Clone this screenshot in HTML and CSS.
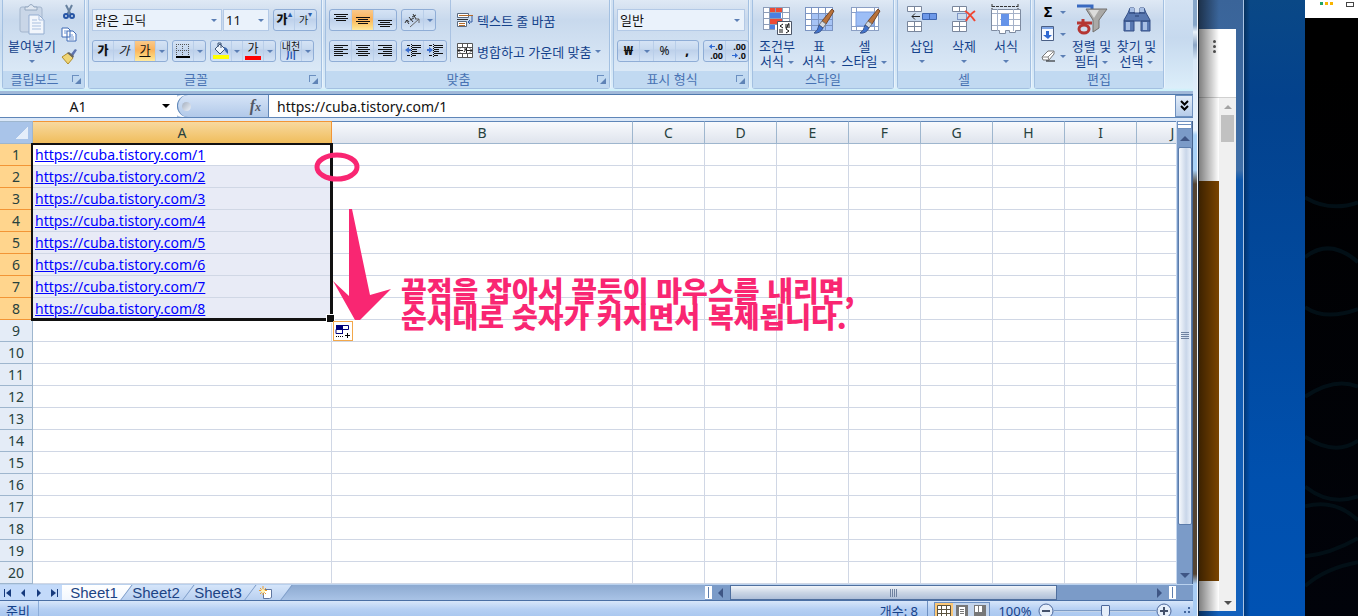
FILE: index.html
```html
<!DOCTYPE html>
<html lang="ko">
<head>
    <meta charset="UTF-8">
    <meta name="viewport" content="width=device-width, initial-scale=1.0">
    <title>Sheet1</title>
    <link rel="stylesheet" href="styles.css">
</head>
<body>
    <main class="excel">
        <!-- Ribbon -->
        <div class="ribbon">
            <section class="group clipboard">
                <div class="group-body">
                    <button class="big">
                        <svg width="32" height="32" viewBox="0 0 32 32"><rect x="4" y="3" width="22" height="25" rx="2" fill="#c9d6e7" stroke="#a3b5cc"/><path d="M9 6V3h3q3-5 6 0h3v3z" fill="#dfe7f1" stroke="#94a7bf"/><path d="M13 11h10l5 5v14H13z" fill="#f2f6fc" stroke="#93add0"/><path d="M23 11v5h5M16 16h5M16 19h9M16 22h9M16 25h9" fill="none" stroke="#a9bfdf"/></svg>
                        <span>붙여넣기</span><i class="caret"></i>
                    </button>
                    <div class="stack">
                        <button class="small" aria-label="잘라내기"><svg width="16" height="16" viewBox="0 0 16 16"><path d="M5 1l5 10M11 1L6 11" stroke="#67819f" stroke-width="2"/><circle cx="5" cy="12" r="2" fill="none" stroke="#2755a5" stroke-width="2"/><circle cx="11" cy="12" r="2" fill="none" stroke="#2755a5" stroke-width="2"/></svg></button>
                        <button class="small" aria-label="복사"><svg width="16" height="16" viewBox="0 0 16 16"><path d="M1 2h6l2 2v7H1zM6 5h6l3 3v7H6z" fill="#fff" stroke="#3f6bb5"/><path d="M3 5h3M3 7h3M8 9h4M8 11h5M8 13h5" stroke="#6f96d4"/></svg></button>
                        <button class="small" aria-label="서식 복사"><svg width="16" height="16" viewBox="0 0 16 16"><path d="M10 6l4-5 2 1-4 6z" fill="#5d74b0"/><path d="M1 9l6-4 5 5-5 6z" fill="#efd575" stroke="#b08d2c"/><path d="M6 5l6 5 1-2-5-4z" fill="#666"/></svg></button>
                    </div>
                </div>
                <h2>클립보드<button class="launch" aria-label="클립보드 옵션"></button></h2>
            </section>

            <section class="group font">
                <div class="group-body rows">
                    <div class="row">
                        <div class="combos">
                            <label class="combo name"><select aria-label="글꼴"><option>맑은 고딕</option></select></label>
                            <label class="combo size"><select aria-label="글꼴 크기"><option>11</option></select></label>
                        </div>
                        <div class="tools">
                            <button class="bold grow">가<sup>▴</sup></button><button class="shrink">가<sup>▾</sup></button>
                        </div>
                    </div>
                    <div class="row">
                        <div class="tools">
                            <button class="bold">가</button><button class="italic">가</button><button class="under on">가</button><button class="drop" aria-label="밑줄 종류"><i class="caret"></i></button>
                        </div>
                        <div class="tools">
                            <button aria-label="테두리"><svg width="14" height="14" viewBox="0 0 14 14"><path d="M0 .5h14M0 6.500h14M.5 0v12M6.500 0v12M12.500 0v12" stroke="#555" stroke-dasharray="1 1"/><path d="M0 13h14" stroke="#000" stroke-width="2"/></svg></button><button class="drop" aria-label="테두리 종류"><i class="caret"></i></button>
                        </div>
                        <div class="tools">
                            <button aria-label="채우기 색"><svg width="18" height="18" viewBox="0 0 18 18"><path d="M3 7l5-5 5 5-5 5z" fill="#eef4fb" stroke="#3c5578"/><path d="M6 5V1h3v5" fill="none" stroke="#3c5578"/><path d="M12 5q5 1 4 7q-2-1-4-5z" fill="#3d69ae"/><path d="M1 13h16v4H1z" fill="#ff0"/></svg></button><button class="drop" aria-label="채우기 색 선택"><i class="caret"></i></button><button class="color"><span>가</span></button><button class="drop" aria-label="글꼴 색 선택"><i class="caret"></i></button>
                        </div>
                        <div class="tools">
                            <button class="ruby"><small>내천</small><b>川</b></button><button class="drop" aria-label="윗주 선택"><i class="caret"></i></button>
                        </div>
                    </div>
                </div>
                <h2>글꼴<button class="launch" aria-label="글꼴 옵션"></button></h2>
            </section>

            <section class="group align">
                <div class="group-body">
                    <div class="rows">
                        <div class="row">
                            <div class="tools">
                                <button aria-label="위쪽 맞춤"><svg width="14" height="16" viewBox="0 0 14 16"><path d="M0 2.500h14M2 4.500h10M0 6.500h14M2 8.500h10" stroke="#111"/></svg></button><button class="on" aria-label="가운데 맞춤"><svg width="14" height="16" viewBox="0 0 14 16"><path d="M0 5.500h14M2 7.500h10M0 9.500h14M2 11.500h10" stroke="#111"/></svg></button><button aria-label="아래쪽 맞춤"><svg width="14" height="16" viewBox="0 0 14 16"><path d="M0 8.500h14M2 10.500h10M0 12.500h14M2 14.500h10" stroke="#111"/></svg></button>
                            </div>
                            <div class="tools">
                                <button aria-label="방향"><svg width="17" height="16" viewBox="0 0 17 16"><path d="M2 8l3 4M1 11q2-5 4-1M5 5l4 5M6 8l4-2M9 2l3 5M8 5l4-2" fill="none" stroke="#333"/><path d="M6 15l9-8M11 7h4v4" fill="none" stroke="#666"/></svg></button><button class="drop" aria-label="방향 선택"><i class="caret"></i></button>
                            </div>
                        </div>
                        <div class="row">
                            <div class="tools">
                                <button aria-label="왼쪽 맞춤"><svg width="14" height="14" viewBox="0 0 14 14"><path d="M0 1.500h14M0 3.500h9M0 5.500h14M0 7.500h9M0 9.500h14M0 11.500h9" stroke="#111"/></svg></button><button aria-label="가로 가운데"><svg width="14" height="14" viewBox="0 0 14 14"><path d="M0 1.500h14M2 3.500h10M0 5.500h14M2 7.500h10M0 9.500h14M2 11.500h10" stroke="#111"/></svg></button><button aria-label="오른쪽 맞춤"><svg width="14" height="14" viewBox="0 0 14 14"><path d="M0 1.500h14M5 3.500h9M0 5.500h14M5 7.500h9M0 9.500h14M5 11.500h9" stroke="#111"/></svg></button>
                            </div>
                            <div class="tools">
                                <button aria-label="내어쓰기"><svg width="16" height="14" viewBox="0 0 16 14"><path d="M2 1.500h3M7 1.500h9M7 3.500h9M7 5.500h5M7 7.500h5M7 9.500h9M2 11.500h3M7 11.500h4" stroke="#111"/><path d="M6.500 0v14" stroke="#111" stroke-dasharray="1 1"/><path d="M0 6l4-3v2h2v2H4v2z" fill="#3c6fd0"/></svg></button><button aria-label="들여쓰기"><svg width="16" height="14" viewBox="0 0 16 14"><path d="M2 1.500h3M7 1.500h9M7 3.500h9M7 5.500h5M7 7.500h5M7 9.500h9M2 11.500h3M7 11.500h4" stroke="#111"/><path d="M6.500 0v14" stroke="#111" stroke-dasharray="1 1"/><path d="M6 6L2 3v2H0v2h2v2z" fill="#3c6fd0"/></svg></button>
                            </div>
                        </div>
                    </div>
                    <div class="rows wide">
                        <button class="text"><svg width="16" height="16" viewBox="0 0 16 16"><path d="M.5 1.500h11v4H.5zM.5 9.500h9v5H.5z" fill="#fff" stroke="#59697f"/><path d="M2 3.500h14M2 11.500h6M2 13.500h6" stroke="#b66b28"/><path d="M0 7.500h11" stroke="#333"/><path d="M15 4v6h-3M13 8l-2 2 2 2" fill="none" stroke="#345da3"/></svg>텍스트 줄 바꿈</button>
                        <button class="text"><svg width="16" height="16" viewBox="0 0 16 16"><path d="M.5 .5h15v14H.5zM5.500 0v4M10.500 0v4M5.500 11v4M10.500 11v4M0 4.500h16M0 10.500h16" fill="#fff" stroke="#555"/><path d="M1 7.500h5M3 5.500l-2 2 2 2M10 7.500h5M13 5.500l2 2-2 2M7 6h2l-2 3M9.500 5v5" fill="none" stroke="#222"/></svg>병합하고 가운데 맞춤<i class="caret"></i></button>
                    </div>
                </div>
                <h2>맞춤<button class="launch" aria-label="맞춤 옵션"></button></h2>
            </section>

            <section class="group number">
                <div class="group-body rows">
                    <div class="row">
                        <label class="combo fill"><select aria-label="표시 형식"><option>일반</option></select></label>
                    </div>
                    <div class="row">
                        <div class="tools">
                            <button class="bold">₩</button><button class="drop" aria-label="통화 선택"><i class="caret"></i></button><button>%</button><button class="bold">,</button>
                        </div>
                        <div class="tools">
                            <button class="digits"><span><svg width="6" height="5" viewBox="0 0 6 5"><path d="M0 2.500L3 0v2h3v1H3v2z" fill="#2e68d2"/></svg>.0</span><span>.00</span></button><button class="digits"><span>.00</span><span><svg width="6" height="5" viewBox="0 0 6 5"><path d="M6 2.500L3 0v2H0v1h3v2z" fill="#2e68d2"/></svg>.0</span></button>
                        </div>
                    </div>
                </div>
                <h2>표시 형식<button class="launch" aria-label="표시 형식 옵션"></button></h2>
            </section>

            <section class="group styles">
                <div class="group-body">
                    <button class="big">
                        <svg width="32" height="32" viewBox="0 0 32 32"><path d="M2 3h27v23H2z" fill="#fff"/><path d="M9 3h13v5H9zM9 14h13v6H9z" fill="#ed4a35"/><path d="M9 8h11v6H9zM9 20h5v6H9z" fill="#4b7fe3"/><path d="M2.500 3v23M8.500 3v23M14.500 3v5M21.500 3v23M28.500 3v23M2 3.500h27M2 8.500h27M2 14.500h27M2 20.500h27M2 25.500h12" stroke="#8c9cb8"/><path d="M16.500 17.500h14v13h-14z" fill="#fff" stroke="#4c5668"/><path d="M22 20l-3 2 3 2M18 26h4M24 21h5M24 23h5M28 19l-3 6M25 25l3 2-3 2M18 28h4" fill="none" stroke="#111"/></svg>
                        <span>조건부</span><span>서식<i class="caret"></i></span>
                    </button>
                    <button class="big">
                        <svg width="32" height="32" viewBox="0 0 32 32"><path d="M2 3h28v24H2z" fill="#fff"/><path d="M9 9h21v18H9z" fill="#a6c3f5"/><path d="M2.500 3v24M8.500 3v24M15.500 3v24M22.500 3v24M29.500 3v24M2 3.500h28M2 9.500h28M2 15.500h28M2 21.500h28M2 26.500h28" stroke="#7b94c2"/><path d="M29 5l2 2-8 13-4-3z" fill="#b9723a" stroke="#74472a"/><path d="M19 17l4 3-3 4-4-3z" fill="#d5d9df" stroke="#777"/><path d="M16 21l4 3q-3 6-9 5q4-2 5-8z" fill="#3f73cf" stroke="#3a548c"/></svg>
                        <span>표</span><span>서식<i class="caret"></i></span>
                    </button>
                    <button class="big last">
                        <svg width="32" height="32" viewBox="0 0 32 32"><path d="M2 3h28v24H2z" fill="#fff"/><path d="M2.500 3v24M7.500 3v24M25.500 3v24M29.500 3v24M2 3.500h28M2 8.500h28M2 22.500h28M2 26.500h28" stroke="#8b9fc4"/><path d="M7 8h18v14H7z" fill="#9dbef6" stroke="#7b9cde"/><path d="M29 5l2 2-8 13-4-3z" fill="#b9723a" stroke="#74472a"/><path d="M19 17l4 3-3 4-4-3z" fill="#d5d9df" stroke="#777"/><path d="M16 21l4 3q-3 6-9 5q4-2 5-8z" fill="#3f73cf" stroke="#3a548c"/></svg>
                        <span>셀</span><span>스타일<i class="caret"></i></span>
                    </button>
                </div>
                <h2>스타일</h2>
            </section>

            <section class="group cells">
                <div class="group-body">
                    <button class="big">
                        <svg width="32" height="32" viewBox="0 0 32 32"><path d="M1.500 2.500h14v5h-14zM8.500 2v5M1.500 17.500h14v10h-14zM8.500 17v10M1 22.500h14" fill="#fff" stroke="#79869c"/><path d="M16.500 9.500h14v6h-14zM23.500 9v6" fill="#6d98e8" stroke="#3f66b0"/><path d="M6 12.500h8M9 9.500l-3 3 3 3" fill="none" stroke="#222"/></svg>
                        <span>삽입</span><i class="caret"></i>
                    </button>
                    <button class="big">
                        <svg width="32" height="32" viewBox="0 0 32 32"><path d="M4.500 2.500h14v5h-14zM11.500 2v5M4.500 17.500h14v10h-14zM11.500 17v10M4 22.500h14" fill="#fff" stroke="#79869c"/><path d="M9.500 9.500h9v6h-9z" fill="none" stroke="#2f4f9a" stroke-dasharray="1 1"/><path d="M17 7q5 3 10 10M27 7q-6 4-9 10" fill="none" stroke="#f04632" stroke-width="2"/></svg>
                        <span>삭제</span><i class="caret"></i>
                    </button>
                    <button class="big">
                        <svg width="32" height="32" viewBox="0 0 32 32"><path d="M2 2.500h26M2 0v5M28 0v5" stroke="#333" stroke-dasharray="3 1"/><path d="M1.500 5.500h29v21h-5v2h-6v-2h-4v3h-6v-3h-8z" fill="#fff" stroke="#7e8ba0"/><path d="M2 9.500h28M2 21.500h28M7.500 5v22M23.500 5v22M10 15.500h20" stroke="#a4b1c8"/><path d="M11 10h8v12h-8z" fill="#6694e9"/></svg>
                        <span>서식</span><i class="caret"></i>
                    </button>
                </div>
                <h2>셀</h2>
            </section>

            <section class="group edit">
                <div class="group-body">
                    <div class="stack">
                        <button class="small"><b>Σ</b><i class="caret"></i></button>
                        <button class="small" aria-label="채우기"><svg width="14" height="16" viewBox="0 0 14 16"><path d="M.5 .5h12v14H.5z" fill="#f4f8ff" stroke="#4a5f85"/><path d="M1 2h11" stroke="#7fa5e5" stroke-width="2"/><path d="M5 5h3v4h3l-4 4-5-4h3z" fill="#2e68d2"/></svg><i class="caret"></i></button>
                        <button class="small" aria-label="지우기"><svg width="14" height="16" viewBox="0 0 14 16"><path d="M1 9l6-6h6v3l-5 6H2z" fill="#fff" stroke="#777"/><path d="M1 9h6l6-6M7 9l1 3" fill="none" stroke="#888"/><path d="M5 13h9" stroke="#111"/></svg><i class="caret"></i></button>
                    </div>
                    <button class="big">
                        <svg width="32" height="32" viewBox="0 0 32 32"><path d="M1 2h15v9" fill="none" stroke="#3869c0" stroke-width="3"/><path d="M10 5h21l-8 11v8l-6 4V16z" fill="#aaa9a7" stroke="#73716e"/><path d="M13 6h10l-5 8z" fill="#dcdcdb"/><path d="M7 15v3M1 19h15" stroke="#b53633" stroke-width="3"/><ellipse cx="8" cy="25" rx="5" ry="4" fill="none" stroke="#b53633" stroke-width="3"/></svg>
                        <span>정렬 및</span><span>필터<i class="caret"></i></span>
                    </button>
                    <button class="big">
                        <svg width="32" height="32" viewBox="0 0 32 32"><path d="M9 4h4v5h6V4h4l2 5 4 7v11h-9V17h-7v10H3V16l4-7z" fill="#5878b1" stroke="#344f86"/><path d="M9 4h4v4H9zM19 4h4v4h-4zM5 18h4v8H5zM22 18h4v8h-4z" fill="#a8bfe4"/><path d="M3 17h10M20 17h9M8 9h6M18 9h6M14 12h4" stroke="#263e70"/></svg>
                        <span>찾기 및</span><span>선택<i class="caret"></i></span>
                    </button>
                </div>
                <h2>편집</h2>
            </section>
        </div>

        <!-- Formula bar -->
        <div class="formula-bar">
            <label class="name-box"><input type="text" value="A1" aria-label="이름 상자"></label>
            <div class="fx"><span class="knob"></span><button>f<small>x</small></button></div>
            <input class="formula" type="text" value="https://cuba.tistory.com/1" aria-label="수식 입력줄">
            <button class="expand" aria-label="수식 입력줄 확장"><svg width="9" height="12" viewBox="0 0 9 12"><path d="M1 1l3.500 3.500L8 1M1 6l3.500 3.500L8 6" fill="none" stroke="#000" stroke-width="2"/></svg></button>
        </div>

        <!-- Sheet -->
        <div class="sheet-area">
            <div class="sheet">
                <table>
                    <colgroup><col class="col-head"><col class="col-a"><col class="col-b"><col span="8" class="col-rest"></colgroup>
                    <thead>
                        <tr><th class="corner"></th><th class="picked">A</th><th>B</th><th>C</th><th>D</th><th>E</th><th>F</th><th>G</th><th>H</th><th>I</th><th>J</th></tr>
                    </thead>
                    <tbody id="rows"></tbody>
                </table>
                <div class="selection"></div>
                <button class="autofill" aria-label="자동 채우기 옵션"><svg width="16" height="16" viewBox="0 0 16 16"><path d="M1 2h6v5H1z" fill="#00007b"/><path d="M1.500 2.500h12v4h-12zM7.500 2v9M1 6.500v4h6" fill="none" stroke="#00007b"/><path d="M1 13.500h7" stroke="#000" stroke-dasharray="1 1"/><path d="M10 12.500h5M12.500 10v5" stroke="#000"/></svg></button>
                <svg class="marks" width="400" height="210" viewBox="0 121 400 210">
                    <ellipse cx="337" cy="167" rx="20" ry="12" fill="none" stroke="#f92672" stroke-width="5"/>
                    <path d="M349 209h3l18 86 21-6-31 31h-5l-22-39 16 15z" fill="#f92672"/>
                </svg>
                <p class="note">끝점을 잡아서 끌듯이 마우스를 내리면,<br>순서대로 숫자가 커지면서 복제됩니다.</p>
            </div>
            <div class="vscroll">
                <span class="split"></span>
                <span class="arrow up"></span>
                <span class="thumb"></span>
                <span class="arrow down"></span>
            </div>
        </div>

        <!-- Sheet tabs -->
        <div class="tab-bar">
            <div class="tab-nav">
                <button aria-label="첫 시트"><svg width="9" height="8" viewBox="0 0 9 8"><path d="M1 0h1v8H1zM8 0v8L3 4z" fill="#163a7d"/></svg></button>
                <button aria-label="이전 시트"><svg width="9" height="8" viewBox="0 0 9 8"><path d="M6 0v8L2 4z" fill="#163a7d"/></svg></button>
                <button aria-label="다음 시트"><svg width="9" height="8" viewBox="0 0 9 8"><path d="M3 0v8l4-4z" fill="#163a7d"/></svg></button>
                <button aria-label="마지막 시트"><svg width="9" height="8" viewBox="0 0 9 8"><path d="M7 0h1v8H7zM1 0v8l5-4z" fill="#163a7d"/></svg></button>
            </div>
            <div class="tabs">
                <button class="tab current">Sheet1</button><button class="tab">Sheet2</button><button class="tab">Sheet3</button><button class="tab new" aria-label="시트 삽입"><svg width="16" height="14" viewBox="0 0 16 14"><path d="M5.500 3.500h8v8l-2 1h-6z" fill="#fff" stroke="#5f76a0"/><path d="M5 0v9M1 4.500h8M2 2l6 6M8 2L2 8" stroke="#ee9d2e"/><circle cx="5" cy="5" r="2" fill="#fff4b8"/></svg></button>
            </div>
            <div class="hscroll">
                <span class="split"></span>
                <span class="arrow left"></span>
                <span class="thumb"></span>
                <span class="arrow right"></span>
                <span class="split"></span>
            </div>
        </div>

        <!-- Status bar -->
        <div class="status">
            <span class="ready">준비</span>
            <span class="count">개수: 8</span>
            <div class="views">
                <button class="on" aria-label="기본"><svg width="14" height="12" viewBox="0 0 14 12"><path d="M.5 .5h13v11H.5zM0 4.500h14M0 8.500h14M4.500 0v12M9.500 0v12" fill="#fff" stroke="#5a5340"/></svg></button><button aria-label="페이지 레이아웃"><svg width="12" height="12" viewBox="0 0 12 12"><path d="M0 0h12v12H0z" fill="#777"/><path d="M3 2h6v9H3z" fill="#fff"/><path d="M4 4.500h4M4 6.500h4M4 8.500h4" stroke="#777"/></svg></button><button aria-label="페이지 나누기"><svg width="12" height="12" viewBox="0 0 12 12"><path d="M0 0h12v12H0z" fill="#777"/><path d="M1 1h3v6H1zM5 1h3v6H5z" fill="#fff"/></svg></button>
            </div>
            <button class="percent">100%</button>
            <button class="zoom" aria-label="축소"><svg width="16" height="16" viewBox="0 0 16 16"><circle cx="8" cy="8" r="7" fill="#e5eefa" stroke="#4c679b"/><path d="M4 8h8" stroke="#42506b" stroke-width="2"/></svg></button>
            <input type="range" min="0" max="100" value="50" aria-label="확대/축소">
            <button class="zoom" aria-label="확대"><svg width="16" height="16" viewBox="0 0 16 16"><circle cx="8" cy="8" r="7" fill="#e5eefa" stroke="#4c679b"/><path d="M4 8h8M8 4v8" stroke="#42506b" stroke-width="2"/></svg></button>
            <svg class="grip" width="10" height="12" viewBox="0 0 10 12"><path d="M6 2h2v2H6zM2 6h2v2H2zM6 6h2v2H6z" fill="#42659c"/></svg>
        </div>
    </main>

    <div class="frame"></div>

    <!-- Browser window behind -->
    <div class="browser">
        <div class="toolbar"><button aria-label="메뉴"><i></i><i></i><i></i></button></div>
        <div class="viewport">
            <div class="page"></div>
            <div class="scrollbar"><span class="arrow up"></span><span class="thumb"></span><span class="arrow down"></span></div>
        </div>
    </div>

    <div class="desktop"></div>

    <div class="dark">
        <div class="dark-top"><i class="green"></i><i></i><i></i><svg width="8" height="5" viewBox="0 0 8 5"><path d="M0 .5h8M0 4.500h8M.5 0v5M7.500 0v5" stroke="#444"/></svg></div>
        <svg class="waves" viewBox="0 0 53 600" preserveAspectRatio="none"><path d="M0 180q25 15 53 5M0 240q25-20 53 5M0 290q20 14 53 2M0 380q30-20 53-10M0 420q30 20 53 4M0 470q25 20 53 10M0 490q30-8 53 14M0 540q25-2 53-18M0 570q20-18 53-24" fill="none" stroke="#020f16" stroke-width="4"/></svg>
    </div>

    <script>
        const tbody = document.getElementById('rows');

        for (let r = 1; r <= 20; r++) {
            const linked = r <= 8;
            let html = `<th${linked ? ' class="picked"' : ''}>${r}</th>`;
            html += linked
                ? `<td class="linked"><a href="https://cuba.tistory.com/${r}">https://cuba.tistory.com/${r}</a></td>`
                : '<td></td>';
            html += '<td></td>'.repeat(9);
            const row = document.createElement('tr');
            row.innerHTML = html;
            tbody.appendChild(row);
        }
    </script>
</body>
</html>
```
FILE: styles.css
```css
* {
    box-sizing: border-box;
}
body {
    margin: 0;
    height: 100vh;
    display: flex;
    overflow: hidden;
    font-family: "Noto Sans", "Noto Sans CJK KR", sans-serif;
    font-size: 13px;
    color: #15428b;
}
button, input, select {
    font: inherit;
    color: inherit;
    margin: 0;
    padding: 0;
    border: none;
    background: none;
}
svg {
    display: block;
    flex: none;
}
.excel {
    flex: 1;
    min-width: 0;
    display: flex;
    flex-direction: column;
    background: #cfe0f5;
}

/* Ribbon */
.ribbon {
    display: flex;
    gap: 3px;
    flex: none;
    height: 95px;
    padding: 0 2px 6px;
    background: linear-gradient(#d3e2f3, #c6d9ee 40%, #dceefa 88px, #c9f3fb 91px, #a1b9d9 91px, #a1b9d9 94px, #4f79ad 94px);
}
.group {
    display: flex;
    flex-direction: column;
    flex: none;
    border: 1px solid #a3c0e1;
    border-top: none;
    border-radius: 0 0 3px 3px;
    background: linear-gradient(#dfe9f5, #d3e0f0 10px, #c8d9ed 20px, #dae8f6 70px);
    box-shadow: 1px 0 #e9f3fc;
}
.clipboard { width: 83px; }
.font { width: 234px; }
.align { width: 285px; }
.number { width: 136px; }
.styles { width: 142px; }
.cells { width: 134px; }
.edit { width: 130px; }
.group-body {
    display: flex;
    flex: 1;
    padding: 0 3px;
}
.group h2 {
    position: relative;
    margin: 0;
    height: 17px;
    font-size: 13px;
    font-weight: normal;
    line-height: 17px;
    text-align: center;
    color: #4872b3;
    background: #c1d9f1;
}
.clipboard h2, .font h2, .align h2, .number h2 {
    padding-right: 18px;
}
.launch {
    position: absolute;
    right: 5px;
    top: 4px;
    width: 7px;
    height: 7px;
    border-top: 1px solid #6b8fc0;
    border-left: 1px solid #6b8fc0;
}
.launch::after {
    content: "";
    position: absolute;
    left: 2px;
    top: 2px;
    border: 3px solid #5f83b6;
    border-top-color: transparent;
    border-left-color: transparent;
}
.rows {
    display: flex;
    flex-direction: column;
    gap: 9px;
    padding-top: 9px;
}
.row {
    display: flex;
    gap: 4px;
    height: 22px;
}
.combos {
    display: flex;
    gap: 1px;
}
.combo {
    position: relative;
    display: flex;
    background: #eaf2fb;
    border: 1px solid #b3c9e6;
    color: #111;
}
.combo select {
    appearance: none;
    width: 100%;
    padding: 0 2px;
    line-height: 20px;
}
.combo::after, .name-box::after {
    content: "";
    position: absolute;
    right: 4px;
    top: 9px;
    border: 3px solid transparent;
    border-top-color: #5b7fb5;
    border-bottom: none;
}
.name { width: 130px; }
.size { width: 46px; }
.fill { flex: 1; }
.tools {
    display: flex;
    border: 1px solid #8fadd6;
    border-radius: 3px;
    background: linear-gradient(#d5e3f5, #c7d9ef 40%, #bdd0ea 45%, #d3e3f6);
}
.tools button {
    display: flex;
    align-items: center;
    justify-content: center;
    width: 22px;
    height: 20px;
    font-size: 12px;
    line-height: 20px;
    color: #111;
    border-right: 1px solid #b9cee9;
}
.font .tools button {
    width: 21px;
}
.tools .drop, .font .tools .drop {
    width: 11px;
}
.number .tools .drop {
    width: 14px;
}
.tools button:last-child {
    border-right: none;
}
.tools .bold {
    font-weight: 900;
}
.tools .italic {
    font-style: italic;
}
.tools .under {
    text-decoration: underline;
}
.tools .on {
    background: linear-gradient(#f9c98b, #fbb35a 45%, #fdd67c 80%, #ffe99f);
}
.tools sup {
    font-size: 8px;
    line-height: 8px;
    align-self: flex-start;
    color: #2b5aa5;
}
.tools .shrink {
    font-size: 10px;
}
.color span {
    width: 16px;
    height: 18px;
    line-height: 14px;
    border-bottom: 4px solid #f00;
}
.tools .ruby {
    flex-direction: column;
    font-size: 10px;
    line-height: 9px;
}
.ruby small {
    font-size: 10px;
}
.ruby b {
    color: #1f4fae;
}
.tools .digits {
    flex-direction: column;
    align-items: flex-end;
    padding-right: 2px;
    font-size: 9px;
    font-weight: bold;
    line-height: 9px;
}
.digits span {
    display: flex;
    align-items: center;
}
.caret {
    flex: none;
    display: inline-block;
    vertical-align: middle;
    border: 3px solid transparent;
    border-top-color: #5b7fb5;
    border-bottom: none;
}
.wide {
    margin-left: 3px;
    padding-left: 6px;
    border-left: 1px solid #a9c2e2;
    height: 62px;
}
.text {
    display: flex;
    align-items: center;
    gap: 4px;
    height: 22px;
    white-space: nowrap;
}
.big {
    display: flex;
    flex-direction: column;
    align-items: center;
    width: 42px;
    padding-top: 4px;
    line-height: 15px;
    white-space: nowrap;
}
.big svg {
    margin-bottom: 3px;
}
.big > .caret {
    margin-top: 6px;
}
.big span .caret {
    margin-left: 4px;
}
.clipboard .big {
    width: 52px;
}
.styles .big.last {
    width: 49px;
}
.edit .big {
    width: 45px;
}
.stack {
    display: flex;
    flex-direction: column;
    gap: 6px;
    padding: 4px 3px 0;
}
.small {
    display: flex;
    align-items: center;
    gap: 5px;
    height: 16px;
}
.small b {
    width: 14px;
    font-size: 14px;
    line-height: 16px;
    color: #000;
}

/* Formula bar */
.formula-bar {
    display: flex;
    flex: none;
    height: 26px;
    padding-bottom: 3px;
    background: linear-gradient(#a9c1e0 22px, #5f86b8 22px, #5f86b8 23px, #dbe8f8 23px);
    color: #111;
    font-size: 14px;
}
.formula-bar > * {
    height: 22px;
}
.name-box {
    position: relative;
    width: 177px;
    background: #fff;
}
.name-box input {
    width: 156px;
    height: 22px;
    text-align: center;
}
.name-box::after {
    right: 7px;
    border-width: 4px;
    border-top-color: #000;
    border-bottom: none;
}
.fx {
    display: flex;
    align-items: center;
    justify-content: space-between;
    width: 91px;
    padding: 0 7px 0 4px;
    border-left: 1px solid #5f86b8;
    border-radius: 11px 0 0 11px;
    background: linear-gradient(#d6e4f7, #b1c9e9);
    box-shadow: -5px 0 #fff;
}
.knob {
    width: 9px;
    height: 9px;
    border-radius: 50%;
    background: linear-gradient(135deg, #a4afbf, #eef3fa);
}
.fx button {
    font-family: "Liberation Serif", serif;
    font-style: italic;
    font-weight: bold;
    font-size: 16px;
    line-height: 20px;
    color: #525866;
}
.fx small {
    font-size: 12px;
}
.formula {
    flex: 1;
    min-width: 0;
    padding-left: 8px;
    border-left: 1px solid #5f86b8;
    background: #fff;
}
.expand {
    display: flex;
    align-items: center;
    justify-content: center;
    width: 18px;
    border: 1px solid #6f91bf;
    background: linear-gradient(#e3edf9, #b6cce9);
}

/* Sheet */
.sheet-area {
    display: flex;
    flex: none;
}
.sheet {
    position: relative;
    flex: 1;
    min-width: 0;
    overflow: hidden;
    background: #fff;
}
table {
    width: 1209px;
    table-layout: fixed;
    border-collapse: separate;
    border-spacing: 0;
    font-size: 14px;
    line-height: 21px;
}
.col-head { width: 33px; }
.col-a { width: 299px; }
.col-b { width: 301px; }
.col-rest { width: 72px; }
th, td {
    padding: 0;
    height: 22px;
    border-right: 1px solid #d0d7e5;
    border-bottom: 1px solid #d0d7e5;
}
th {
    font-weight: normal;
    color: #27413e;
    background: #e4ecf7;
    border-color: #9eb6ce;
}
thead th {
    height: 23px;
    border-top: 1px solid #5f86b8;
    background: linear-gradient(#f8fafd, #dfe4ed);
}
th.picked {
    background: #ffd58d;
    border-color: #f29536;
}
thead th.picked {
    background: linear-gradient(#f8d99f, #f0bd5c);
}
thead th.corner {
    background: linear-gradient(135deg, transparent 50%, #e5eefa 50%) no-repeat 15px 5px / 13px 12px, #a9c4e9;
    border-color: #9eb6ce;
}
td.linked {
    padding-left: 2px;
    background: #e8ebf6;
    white-space: nowrap;
}
tr:first-child td.linked {
    background: #fff;
}
td a {
    color: #00f;
}
.selection {
    position: absolute;
    left: 31px;
    top: 22px;
    width: 302px;
    height: 178px;
    border: 2px solid #111;
    border-right-width: 3px;
    border-bottom-width: 3px;
}
.selection::after {
    content: "";
    position: absolute;
    right: -5px;
    bottom: -5px;
    width: 7px;
    height: 7px;
    border: 1px solid #fff;
    background: #111;
}
.autofill {
    position: absolute;
    left: 333px;
    top: 200px;
    width: 20px;
    height: 20px;
    padding: 1px;
    border: 1px solid #f2a84b;
    background: #fff;
}
.marks {
    position: absolute;
    left: 0;
    top: 0;
}
.note {
    position: absolute;
    left: 401px;
    top: 156px;
    margin: 0;
    font-family: "Noto Sans CJK KR", sans-serif;
    font-weight: 900;
    font-size: 28px;
    line-height: 26px;
    color: #f92672;
    white-space: nowrap;
}
.vscroll {
    display: flex;
    flex-direction: column;
    align-items: center;
    width: 17px;
    border-left: 1px solid #c5d7ef;
    border-right: 1px solid #46648f;
    background: #7b9bc8;
}
.vscroll .split {
    width: 100%;
    height: 8px;
    border: 1px solid #6f91bf;
    background: linear-gradient(#fff 2px, #6f91bf 2px, #6f91bf 3px, #fff 3px);
}
.arrow {
    border: 5px solid transparent;
}
.arrow.up {
    border-top: none;
    border-bottom-color: #3f5685;
    margin: 7px 0 6px;
}
.arrow.down {
    border-bottom: none;
    border-top-color: #3f5685;
    margin: 48px 0 6px;
}
.vscroll .thumb {
    flex: 1;
    width: 14px;
    border: 1px solid #5b7cab;
    border-radius: 2px;
    background: repeating-linear-gradient(#6f82a0 0 1px, transparent 1px 2px) center / 8px 8px no-repeat, linear-gradient(90deg, #f6f9fd, #c9d6e9 60%, #e7effa);
}

/* Sheet tabs */
.tab-bar {
    display: flex;
    flex: none;
    height: 17px;
    border-top: 1px solid #b9d1ee;
    border-bottom: 1px solid #4a6fa5;
    background: linear-gradient(#8daad1, #a9c3e6);
}
.tab-nav {
    display: flex;
    align-items: center;
    justify-content: space-around;
    width: 62px;
    background: #c3dafa;
}
.tabs {
    display: flex;
    flex: 1;
}
.tab {
    position: relative;
    isolation: isolate;
    width: 62px;
    padding-left: 2px;
    font-family: "Liberation Sans", "Noto Sans CJK KR", sans-serif;
    font-size: 15px;
    line-height: 15px;
    color: #1c4384;
}
.tab::before {
    content: "";
    position: absolute;
    z-index: -1;
    inset: 0 -3px 0 3px;
    border-right: 1px solid #7d9cc8;
    background: linear-gradient(#d5e5fa, #b9d0f0);
    transform: skewX(-37deg);
}
.tab.current {
    background: linear-gradient(#fff, #f2f7fe) no-repeat 0 0 / 40px 100%;
}
.tab.current::before {
    inset: 0 -3px 0 10px;
    background: linear-gradient(#fff, #f2f7fe);
}
.tab.new {
    width: 36px;
    padding-left: 10px;
}
.hscroll {
    display: flex;
    align-items: center;
    width: 488px;
    padding-right: 17px;
    background: #7b9bc8;
}
.hscroll .split {
    width: 7px;
    height: 13px;
    border: 1px solid #fff;
    background: linear-gradient(90deg, #fff 2px, #5f7fae 2px, #5f7fae 3px, #fff 3px);
}
.hscroll .thumb {
    flex: 1;
    height: 15px;
    border: 1px solid #4f6f9e;
    background: repeating-linear-gradient(90deg, #6f82a0 0 1px, transparent 1px 2px) center / 8px 8px no-repeat, linear-gradient(#f2f5fa, #cbd6e5 50%, #aebfd8);
}
.arrow.left {
    margin: 0 7px 0 6px;
    border-left: none;
    border-right-color: #3f5685;
}
.arrow.right {
    margin: 0 7px 0 100px;
    border-right: none;
    border-left-color: #3f5685;
}

/* Status bar */
.status {
    display: flex;
    align-items: center;
    flex: none;
    height: 20px;
    background: linear-gradient(#d7e6fa, #b6d0f4 8px, #a2c2ec);
    line-height: 20px;
}
.ready {
    width: 39px;
    padding-left: 6px;
    border-right: 1px solid #8cadd9;
}
.count {
    margin-left: auto;
    padding-right: 9px;
    border-right: 1px solid #6d90c2;
}
.views {
    display: flex;
    margin: 0 8px 0 6px;
    border: 1px solid #6d90c2;
}
.views button {
    display: flex;
    align-items: center;
    justify-content: center;
    width: 18px;
    height: 16px;
    background: #c4d5ec;
}
.views .on {
    background: #fbc775;
}
.percent {
    width: 34px;
    margin-right: 6px;
}
.status input {
    appearance: none;
    width: 102px;
    height: 16px;
    background: linear-gradient(#5b7fb3, #e6f0fc) center / 100% 2px no-repeat;
}
.status input::-webkit-slider-thumb {
    appearance: none;
    width: 9px;
    height: 13px;
    border: 1px solid #4c679b;
    border-radius: 1px 1px 4px 4px;
    background: #e5eefa;
}
.grip {
    margin: 0 1px 0 10px;
}

/* Window edge */
.frame {
    flex: none;
    width: 6px;
    border-right: 1px solid #16202e;
    background: linear-gradient(#86a6c9 25px, #e9f2fb 32px, #8ba5c5 45px, #d8e8f8 60px, #e9f4ff 130px, #a9d2f8 135px, #a9d2f8 170px, #554534 184px, #554534 574px, #a9cdf5 584px);
    box-shadow: inset -1px 0 #f3f7fc;
}

/* Browser behind */
.browser {
    position: relative;
    display: flex;
    flex-direction: column;
    flex: none;
    width: 45px;
    padding: 29px 7px 5px 0;
    border-right: 1px solid #a9c4e4;
    background: linear-gradient(#3a6499, #3f6fa8 170px, #0f58ac 180px, #1261bd);
}
.browser::before {
    content: "";
    position: absolute;
    inset: 0 24px 0 0;
    background: linear-gradient(90deg, rgba(0, 0, 0, 0.5), transparent);
}
.toolbar {
    height: 69px;
    padding: 11px 0 0 14px;
    background: #fff;
    border-bottom: 1px solid #d0d0d0;
}
.toolbar button {
    display: flex;
    flex-direction: column;
    gap: 2px;
}
.toolbar i {
    width: 3px;
    height: 3px;
    border-radius: 50%;
    background: #555;
}
.viewport {
    display: flex;
    flex: 1;
}
.page {
    flex: 1;
    background: linear-gradient(#fff 83px, #7a4400 83px, #7a4400 483px, #fff 483px);
}
.scrollbar {
    display: flex;
    flex-direction: column;
    align-items: center;
    width: 17px;
    background: #f0f0f0;
}
.scrollbar .arrow {
    border-width: 4px;
}
.scrollbar .arrow.up {
    margin: 7px 0 6px;
    border-top: none;
    border-bottom-color: #a3a3a3;
}
.scrollbar .thumb {
    width: 13px;
    height: 27px;
    background: #c1c1c1;
}
.scrollbar .arrow.down {
    margin: auto 0 6px;
    border-bottom: none;
    border-top-color: #505050;
}
.desktop {
    flex: none;
    width: 61px;
    background: linear-gradient(90deg, rgba(0, 0, 0, 0.3), transparent 6px), linear-gradient(#0a4886, #03428d 100px, #0050ae 480px, #0052b3);
}
.dark {
    flex: none;
    width: 53px;
    background: linear-gradient(#000 70px, #01030a);
}
.dark-top {
    display: flex;
    gap: 2px;
    height: 18px;
    padding: 2px 0 0 15px;
    background: #fff;
}
.dark-top i {
    width: 3px;
    height: 3px;
    background: #f8b400;
}
.dark-top .green {
    background: #1fa463;
}
.dark-top svg {
    margin-left: 11px;
}
.waves {
    width: 100%;
    height: calc(100% - 18px);
}
```
